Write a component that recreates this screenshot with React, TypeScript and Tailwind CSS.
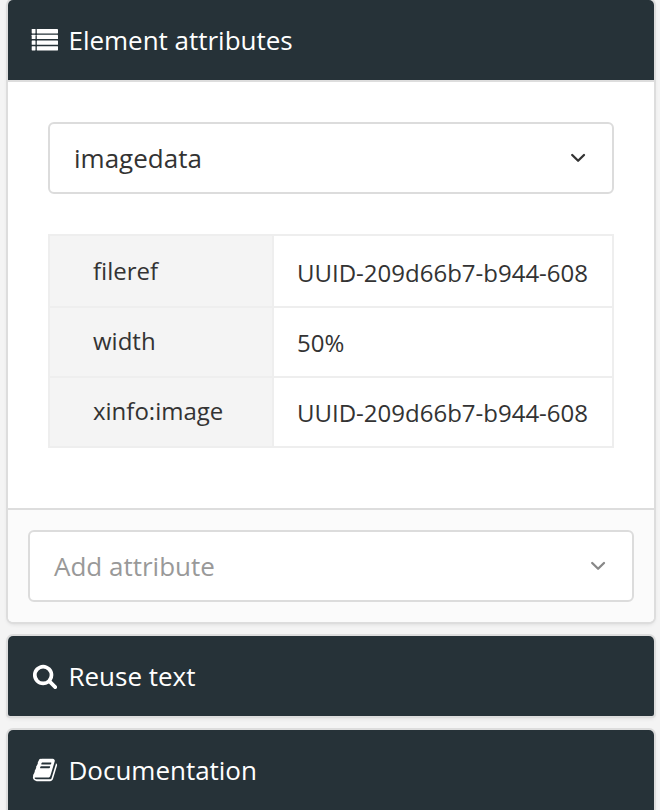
import type { ReactNode } from 'react';

const attributes = [
  { name: 'fileref', value: 'UUID-209d66b7-b944-608' },
  { name: 'width', value: '50%' },
  { name: 'xinfo:image', value: 'UUID-209d66b7-b944-608' },
];

function ListIcon() {
  return (
    <svg className="h-7 w-[27px]" viewBox="0 0 27 28" fill="currentColor">
      {[3.1, 8.8, 14.5, 20.2].map((y) => (
        <g key={y}>
          <rect x="0.7" y={y} width="3.8" height="4.3" rx="0.4" />
          <rect x="5.8" y={y} width="21.2" height="4.3" rx="0.4" />
        </g>
      ))}
    </svg>
  );
}

function SearchIcon() {
  return (
    <svg className="h-[26px] w-[26px]" viewBox="0 0 1792 1792" fill="currentColor">
      <path d="M1216 832q0-185-131.5-316.5t-316.5-131.5-316.5 131.5-131.5 316.5 131.5 316.5 316.5 131.5 316.5-131.5 131.5-316.5zm512 832q0 52-38 90t-90 38q-54 0-90-38l-343-342q-179 124-399 124-143 0-273.5-55.5t-225-150-150-225-55.5-273.5 55.5-273.5 150-225 225-150 273.5-55.5 273.5 55.5 225 150 150 225 55.5 273.5q0 220-124 399l343 343q37 37 37 90z" />
    </svg>
  );
}

function BookIcon() {
  return (
    <svg className="h-[26px] w-[26px]" viewBox="0 0 1792 1792" fill="currentColor">
      <path d="M1703 478q40 57 18 129l-275 906q-19 64-76.5 107.5t-122.5 43.5h-923q-77 0-148.5-53.5t-99.5-131.5q-24-67-2-127 0-4 3-27t4-37q1-8-3-21.5t-3-19.5q2-11 8-21t16.5-23.5 16.5-23.5q23-38 45-91.5t30-91.5q3-10 .5-30t-.5-28q3-11 17-28t17-23q21-36 42-92t25-90q1-9-2.5-32t.5-28q4-13 22-30.5t22-22.5q19-26 42.5-84.5t27.5-96.5q1-8-3-25.5t-2-26.5q2-8 9-18t18-23 17-21q8-12 16.5-30.5t15-35 16-36 19.5-32 26.5-23.5 36-11.5 47.5 5.5l-1 3q38-9 51-9h761q74 0 114 56t18 130l-274 906q-36 119-71.5 153.5t-128.5 34.5h-869q-27 0-38 15-11 16-1 43 24 70 144 70h923q29 0 56-15.5t35-41.5l300-987q7-22 5-57 38 15 59 43zm-1064 2q-4 13 2 22.5t20 9.5h608q13 0 25.5-9.5t16.5-22.5l21-64q4-13-2-22.5t-20-9.5h-608q-13 0-25.5 9.5t-16.5 22.5zm-83 256q-4 13 2 22.5t20 9.5h608q13 0 25.5-9.5t16.5-22.5l21-64q4-13-2-22.5t-20-9.5h-608q-13 0-25.5 9.5t-16.5 22.5z" />
    </svg>
  );
}

function Chevron() {
  return (
    <svg className="h-4 w-4" viewBox="0 0 16 16" fill="none" stroke="currentColor" strokeWidth="2.3" strokeLinecap="round" strokeLinejoin="round">
      <path d="M2.2 5 8.1 10.8 14 5" />
    </svg>
  );
}

function Header({ icon, title }: { icon: ReactNode; title: string }) {
  return (
    <div className="flex h-20 items-center bg-[#263238] pl-[23px] text-[26px] text-white">
      <span className="flex w-[27px] justify-center">{icon}</span>
      <h2 className="ml-[10.5px] leading-9 tracking-[-0.02px]">{title}</h2>
    </div>
  );
}

function Panel({ children }: { children: ReactNode }) {
  return (
    <section className="overflow-hidden rounded-t-[5px] rounded-b-[5px] bg-white shadow-[0_0_0_2px_#dddddd,0_2px_4px_0_#22242626] not-first:rounded-b-[2px] last:rounded-b-none">
      {children}
    </section>
  );
}

function Select({ children }: { children: ReactNode }) {
  return (
    <button className="flex h-[72px] w-full items-center justify-between rounded-md border-2 border-[#dcdcdc] bg-white pr-[26px] pl-6 text-left text-[26px]">
      {children}
      <Chevron />
    </button>
  );
}

export default function App() {
  return (
    <main className="flex h-[810px] flex-col gap-[14px] overflow-hidden bg-[#f4f4f4] pr-[6px] pl-2 font-['Open_Sans',sans-serif] text-[#333333] *:shrink-0">
      <Panel>
        <Header icon={<ListIcon />} title="Element attributes" />
        <div className="h-[430px] border-y-2 border-[#dddddd] px-10 pt-10">
          <Select>
            <span className="leading-9">imagedata</span>
          </Select>
          <div className="mt-10 flex flex-col border-2 border-[#eeeeee] text-2xl">
            {attributes.map((a) => (
              <div key={a.name} className="group flex h-[70px] border-b-2 border-[#eeeeee] first:h-[72px] last:h-[68px] last:border-b-0">
                <div className="flex w-[224px] items-center border-r-2 border-[#eeeeee] bg-[#f4f4f4] pb-[2px] pl-[43px] group-first:pb-0">
                  {a.name}
                </div>
                <div className="flex items-center pt-[2px] pl-[23px] group-first:pt-1">{a.value}</div>
              </div>
            ))}
          </div>
        </div>
        <div className="h-28 bg-[#fbfbfb] px-5 pt-5">
          <div className="text-[#888888]">
            <Select>
              <span className="leading-9 text-[#999999]">Add attribute</span>
            </Select>
          </div>
        </div>
      </Panel>
      <Panel>
        <Header icon={<SearchIcon />} title="Reuse text" />
      </Panel>
      <Panel>
        <Header icon={<BookIcon />} title="Documentation" />
      </Panel>
    </main>
  );
}
